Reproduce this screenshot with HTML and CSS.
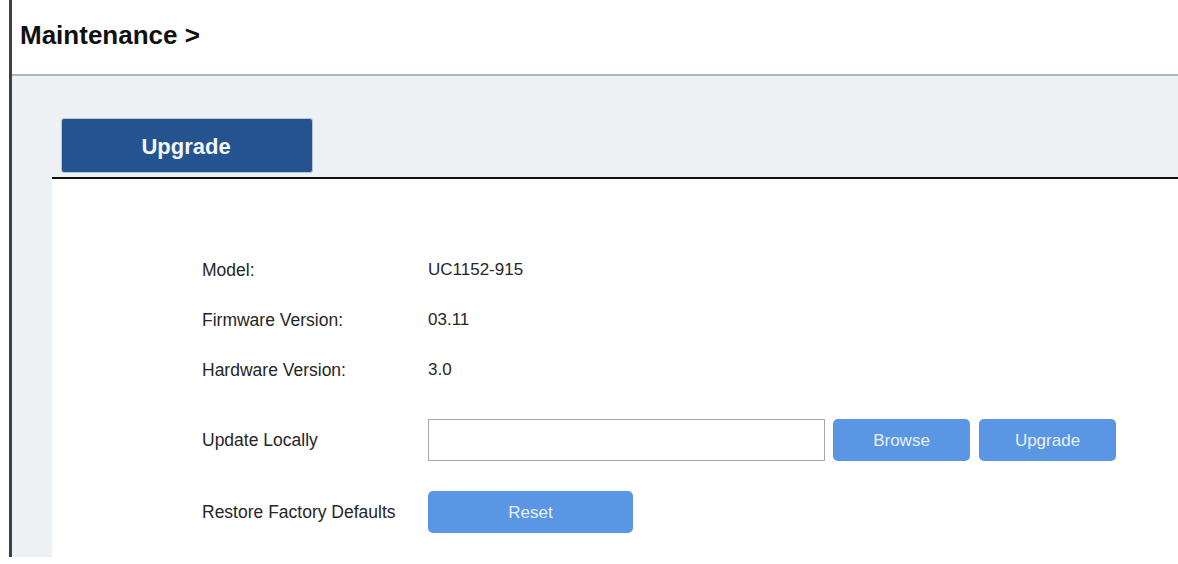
FILE: index.html
```html
<!DOCTYPE html>
<html>
<head>
<meta charset="utf-8">
<title>Maintenance</title>
<link rel="stylesheet" href="styles.css">
</head>
<body>
<div class="page">
  <div class="frame">
    <header class="header">
      <h1 class="title">Maintenance &gt;</h1>
    </header>
    <div class="main">
      <div class="tabs">
        <div class="tab active">Upgrade</div>
      </div>
      <div class="content">
        <div class="row info">
          <div class="label">Model:</div>
          <div class="value">UC1152-915</div>
        </div>
        <div class="row info">
          <div class="label">Firmware Version:</div>
          <div class="value">03.11</div>
        </div>
        <div class="row info">
          <div class="label">Hardware Version:</div>
          <div class="value">3.0</div>
        </div>
        <div class="row action upload">
          <div class="label">Update Locally</div>
          <div class="controls">
            <input class="file-input" type="text">
            <button class="btn small">Browse</button>
            <button class="btn small">Upgrade</button>
          </div>
        </div>
        <div class="row action reset">
          <div class="label">Restore Factory Defaults</div>
          <div class="controls">
            <button class="btn wide">Reset</button>
          </div>
        </div>
      </div>
    </div>
  </div>
</div>
</body>
</html>
```

FILE: styles.css
```css
* { box-sizing: border-box; }

html, body {
  margin: 0;
  padding: 0;
  background: #ffffff;
  font-family: "Liberation Sans", Arial, sans-serif;
  color: #222;
}

.page {
  padding-left: 9px;
  width: 1178px;
  height: 564px;
  overflow: hidden;
}

.frame {
  height: 557px;
  border-left: 3px solid #3c4049;
  display: flex;
  flex-direction: column;
}

.header {
  height: 76px;
  flex: none;
  background: #ffffff;
  border-bottom: 2px solid #b3b6ba;
  display: flex;
  align-items: center;
  padding: 0 0 3px 8px;
}

.title {
  margin: 0;
  font-size: 26px;
  font-weight: bold;
  color: #111;
}

.main {
  flex: 1;
  background: #edf1f4;
  padding-left: 40px;
  display: flex;
  flex-direction: column;
}

.tabs {
  padding: 42px 0 4px 9px;
  display: flex;
}

.tab {
  width: 252px;
  height: 55px;
  border: 1px solid #b9c5d3;
  border-radius: 3px;
  background: #24538f;
  color: #f2f5fa;
  font-size: 22px;
  font-weight: bold;
  display: flex;
  align-items: center;
  justify-content: center;
  padding: 2px 2px 0 0;
}

.content {
  flex: 1;
  background: #ffffff;
  border-top: 2px solid #111;
  padding: 66px 0 0 150px;
}

.row {
  display: flex;
  align-items: center;
  font-size: 17px;
  color: #262626;
}

.row.info { height: 50px; }

.row.action { height: 42px; }
.row.upload { margin-top: 24px; }
.row.reset { margin-top: 30px; }

.label { width: 226px; flex: none; font-size: 17.5px; padding-top: 1px; }

.controls {
  display: flex;
  align-items: center;
  gap: 8px;
}

.file-input {
  width: 397px;
  height: 42px;
  border: 1px solid #a9a9a9;
  background: #ffffff;
  margin: 0;
  padding: 0 6px;
  font-family: inherit;
}

.btn {
  height: 42px;
  border: none;
  border-radius: 5px;
  background: #5a96e4;
  color: #e9f0fb;
  font-family: "Liberation Sans", Arial, sans-serif;
  font-size: 17px;
  margin: 0;
  padding: 1px 0 0 0;
}

.btn.small { width: 137px; }
.controls .btn.small + .btn.small { margin-left: 1px; }
.btn.wide { width: 205px; }
```
